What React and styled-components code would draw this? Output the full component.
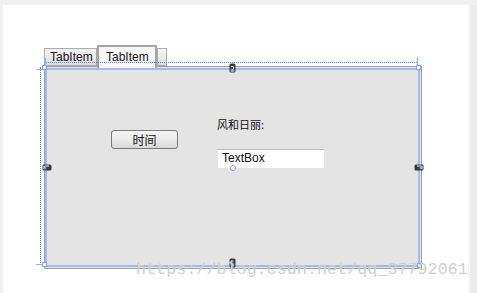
import React from 'react';
import styled, { createGlobalStyle } from 'styled-components';

const Global = createGlobalStyle`
  html, body { margin: 0; padding: 0; background: #f0f0f0; }
  body { font-family: "Liberation Sans", "Noto Sans CJK SC", sans-serif; }
`;

const Frame = styled.div`
  width: 477px;
  height: 293px;
  display: flex;
  overflow: hidden;
`;

const Canvas = styled.div`
  position: relative;
  width: 465px;
  margin: 5px 0 0 3px;
  background: #ffffff;
  padding: 40px 0 0 41px;
  box-sizing: border-box;
`;

const RightStrip = styled.div`
  width: 9px;
  margin-top: 5px;
  background: #ebebeb;
  border-left: 2px solid #f6f6f6;
  box-sizing: border-box;
`;

const TabControl = styled.div`
  position: relative;
  width: 378px;
`;

const TabStrip = styled.div`
  display: flex;
  align-items: flex-end;
  height: 21px;
`;

const Tab = styled.div`
  box-sizing: border-box;
  width: ${p => p.$w}px;
  height: ${p => (p.$active ? 23 : 18)}px;
  margin-bottom: ${p => (p.$active ? -2 : 0)}px;
  border: ${p => (p.$active ? '2px solid #a4a4a4' : '1px solid #ababab')};
  border-bottom: ${p => (p.$active ? 'none' : '1px solid #ababab')};
  background: ${p =>
    p.$active ? '#f7f7f7' : 'linear-gradient(#f3f3f3, #ebebeb 50%, #dcdcdc)'};
  font-size: 12px;
  color: #1a1020;
  padding: ${p => (p.$active ? '3px 0 0 7px' : '1px 0 0 5px')};
  z-index: ${p => (p.$active ? 2 : 1)};
  position: relative;
`;

const Panel = styled.div`
  box-sizing: border-box;
  height: 203px;
  border: 1px solid #a0a0a0;
  padding: 1px 1px 1px 0;
  background: #e4e4e4;
`;

const Surface = styled.div`
  box-sizing: border-box;
  height: 100%;
  border: 2px solid #9dbbf0;
  display: flex;
  align-items: flex-start;
  padding: 60px 0 0 64px;
`;

const Button = styled.div`
  box-sizing: border-box;
  width: 67px;
  height: 19px;
  border: 1px solid #7a7a7a;
  border-radius: 3px;
  background: linear-gradient(#f4f4f4, #ebebeb 50%, #d9d9d9);
  font-size: 12px;
  line-height: 17px;
  text-align: center;
  color: #111;
  font-family: "Noto Sans CJK SC", sans-serif;
`;

const Field = styled.div`
  display: flex;
  flex-direction: column;
  margin: -14px 0 0 39px;
`;

const Label = styled.div`
  font-family: "Noto Sans CJK SC", sans-serif;
  font-size: 11px;
  line-height: 16px;
  color: #111;
  margin-bottom: 17px;
`;

const TextBox = styled.div`
  position: relative;
  box-sizing: border-box;
  width: 107px;
  height: 19px;
  background: #fff;
  border-top: 1px solid #b9b9b9;
  border-left: 1px solid #e2e2e2;
  font-size: 12px;
  line-height: 17px;
  padding-left: 4px;
  color: #111;
`;

const Pin = styled.span`
  position: absolute;
  left: 12px;
  bottom: -3px;
  width: 4px;
  height: 4px;
  border: 1px solid #7aa2ea;
  border-radius: 50%;
  background: #fff;
`;

const Dotted = styled.div`
  position: absolute;
  z-index: 3;
  left: ${p => p.$x}px;
  top: ${p => p.$y}px;
  width: ${p => (p.$v ? 0 : p.$len)}px;
  height: ${p => (p.$v ? p.$len : 0)}px;
  border-${p => (p.$v ? 'left' : 'top')}: 1px dotted #4a86e8;
`;

const Rule = styled.div`
  position: absolute;
  z-index: 3;
  left: ${p => p.$x}px;
  top: ${p => p.$y}px;
  width: ${p => p.$w}px;
  height: ${p => p.$h}px;
  background: #8fb0ee;
`;

const Handle = styled.div`
  position: absolute;
  left: ${p => p.$x}px;
  top: ${p => p.$y}px;
  width: 3px;
  height: 3px;
  border: 1px solid #7ea4ec;
  background: #fff;
  z-index: 4;
`;

const Anchor = styled.svg`
  position: absolute;
  left: ${p => p.$x}px;
  top: ${p => p.$y}px;
  z-index: 4;
`;

const Watermark = styled.div`
  position: absolute;
  z-index: 5;
  left: 133px;
  top: 255px;
  font-family: "Liberation Mono", monospace;
  font-size: 16.6px;
  color: #cfcfcf;
  letter-spacing: 0.1px;
`;

const VAnchor = ({ x, y, flip }) => (
  <Anchor $x={x} $y={y} width="7" height="10" viewBox="0 0 7 10">
    <rect x="0.5" y="0.5" width="6" height="9" rx="1.5" fill="#3a3a3a" />
    <path d={flip ? 'M2 6.5 V3 H4.5' : 'M2 3.5 H4.5 V7'} stroke="#fff" strokeWidth="1" fill="none" />
    <rect x="2" y={flip ? 5.5 : 6} width="3" height="3" fill="#9fbdf2" stroke="#5d8ae0" strokeWidth="0.6" />
  </Anchor>
);

const HAnchor = ({ x, y, flip }) => (
  <Anchor $x={x} $y={y} width="10" height="7" viewBox="0 0 10 7">
    <rect x="0.5" y="0.5" width="9" height="6" rx="1.5" fill="#3a3a3a" />
    <path d={flip ? 'M3 2 H7 V4.5' : 'M7 2 H3 V4.5'} stroke="#fff" strokeWidth="1" fill="none" />
    <rect x={flip ? 6 : 1} y="2" width="3" height="3" fill="#9fbdf2" stroke="#5d8ae0" strokeWidth="0.6" />
  </Anchor>
);

const App = () => (
  <>
    <Global />
    <Frame>
      <Canvas>
        <TabControl>
          <TabStrip>
            <Tab $w={53}>TabItem</Tab>
            <Tab $w={60} $active>TabItem</Tab>
            <Tab $w={10} />
          </TabStrip>
          <Panel>
            <Surface>
              <Button>时间</Button>
              <Field>
                <Label>风和日丽:</Label>
                <TextBox>
                  TextBox
                  <Pin />
                </TextBox>
              </Field>
            </Surface>
          </Panel>

          <Dotted $x={2} $y={17} $len={371} />
          <Dotted $v $x={-4} $y={22} $len={198} />
          <Rule $x={-8} $y={24} $w={9} $h={1} />
          <Rule $x={1} $y={13} $w={1} $h={8} />
          <Rule $x={373} $y={12} $w={1} $h={8} />
          <Rule $x={-8} $y={219} $w={9} $h={1} />
          <Handle $x={-2} $y={20} />
          <Handle $x={372} $y={20} />
          <Handle $x={-2} $y={217} />
          <Handle $x={373} $y={218} />
          <VAnchor x={185} y={18} />
          <VAnchor x={185} y={213} flip />
          <HAnchor x={-2} y={119} />
          <HAnchor x={370} y={119} flip />
        </TabControl>
        <Watermark>https://blog.csdn.net/qq_37792061</Watermark>
      </Canvas>
      <RightStrip />
    </Frame>
  </>
);

export default App;
